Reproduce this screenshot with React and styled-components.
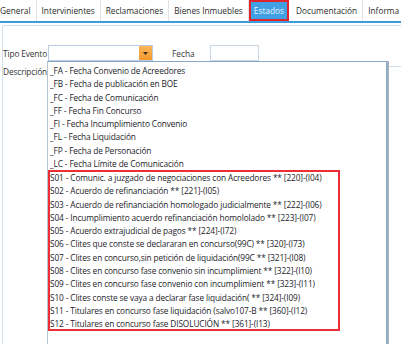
import React from 'react';
import styled, { createGlobalStyle } from 'styled-components';

const GlobalStyle = createGlobalStyle`
    body {
        margin: 0;
        background: #ffffff;
        font-family: "Open Sans", "Noto Sans", sans-serif;
        color: #1b1b1b;
    }
`;

const tabs = ['General', 'Intervinientes', 'Reclamaciones', 'Bienes Inmuebles', 'Estados', 'Documentación', 'Informa'];

const plainItems = [
    '_FA - Fecha Convenio de Acreedores',
    '_FB - Fecha de publicación en BOE',
    '_FC - Fecha de Comunicación',
    '_FF - Fecha Fin Concurso',
    '_FI - Fecha Incumplimiento Convenio',
    '_FL - Fecha Liquidación',
    '_FP - Fecha de Personación',
    '_LC - Fecha Límite de Comunicación'
];

const markedItems = [
    'S01 - Comunic. a juzgado de negociaciones con Acreedores ** [220]-(I04)',
    'S02 - Acuerdo de refinanciación ** [221]-(I05)',
    'S03 - Acuerdo de refinanciación homologado judicialmente ** [222]-(I06)',
    'S04 - Incumplimiento acuerdo refinanciación homololado ** [223]-(I07)',
    'S05 - Acuerdo extrajudicial de pagos ** [224]-(I72)',
    'S06 - Clites que conste se declararan en concurso(99C) ** [320]-(I73)',
    'S07 - Clites en concurso,sin petición de liquidación(99C ** [321]-(I08)',
    'S08 - Clites en concurso fase convenio sin incumplimient ** [322]-(I10)',
    'S09 - Clites en concurso fase convenio con incumplimient ** [323]-(I11)',
    'S10 - Clites conste se vaya a declarar fase liquidación( ** [324]-(I09)',
    'S11 - Titulares en concurso fase liquidación (salvo107-B ** [360]-(I12)',
    'S12 - Titulares en concurso fase DISOLUCIÓN ** [361]-(I13)'
];

const App = () => {
    return (
        <Page>
            <GlobalStyle />
            <TabBar>
                {tabs.map(t => (
                    <Tab key={t} $active={t === 'Estados'}>{t}</Tab>
                ))}
            </TabBar>
            <Panel>
                <FormRow>
                    <Label>Tipo Evento</Label>
                    <Combo>
                        <ComboInput />
                        <ComboButton>
                            <svg width="5" height="3" viewBox="0 0 5 3">
                                <path d="M0 0h5L2.5 3z" fill="#3a2a1a" />
                            </svg>
                        </ComboButton>
                        <DropList>
                            {plainItems.map(i => <Item key={i}>{i}</Item>)}
                            <Marked>
                                {markedItems.map(i => <Item key={i}>{i}</Item>)}
                            </Marked>
                        </DropList>
                    </Combo>
                    <DateLabel>Fecha</DateLabel>
                    <DateInput />
                </FormRow>
                <FormRow $second>
                    <Label>Descripción</Label>
                    <TextArea />
                </FormRow>
            </Panel>
        </Page>
    );
};

const Page = styled.div`
    width: 401px;
    height: 344px;
    overflow: hidden;
    display: flex;
    flex-direction: column;
`;

const TabBar = styled.div`
    display: flex;
    height: 21px;
    border-bottom: 2px solid #3b9bdb;
    font-size: 8.3px;
    white-space: nowrap;
`;

const Tab = styled.div`
    display: flex;
    align-items: center;
    padding: ${p => (p.$active ? '0 3px' : '0 5px')};
    height: 21px;
    box-sizing: border-box;
    color: ${p => (p.$active ? '#eaf5ff' : '#2a2a2a')};
    background: ${p => (p.$active ? '#41a0e4' : 'transparent')};
    border: ${p => (p.$active ? '2px solid #e0242c' : 'none')};
    border-right: ${p => (p.$active ? '2px solid #e0242c' : '1px solid #e2e2e2')};
    margin-left: ${p => (p.$active ? '0' : '0')};
    margin-right: ${p => (p.$active ? '2px' : '0')};
    &:first-child { padding-left: 0; }
`;

const Panel = styled.div`
    flex: 1;
    margin: 2px 0 0 2px;
    border: 1px solid #d3dfeb;
    border-right: none;
    border-bottom: none;
    border-radius: 3px 0 0 0;
    padding: 19px 0 0 0;
    display: flex;
    flex-direction: column;
`;

const FormRow = styled.div`
    display: flex;
    align-items: ${p => (p.$second ? 'flex-start' : 'center')};
    height: ${p => (p.$second ? 'auto' : '16px')};
    margin-top: ${p => (p.$second ? '5px' : '0')};
`;

const Label = styled.div`
    width: 45px;
    font-size: 8.3px;
    letter-spacing: -0.12px;
    color: #333;
    white-space: nowrap;
`;

const Combo = styled.div`
    position: relative;
    display: flex;
    width: 105px;
    height: 16px;
    border: 1px solid #b9cde2;
    box-sizing: border-box;
`;

const ComboInput = styled.div`
    flex: 1;
    background: #fff;
`;

const ComboButton = styled.div`
    width: 13px;
    display: flex;
    align-items: center;
    justify-content: center;
    background: linear-gradient(#fbb55a, #f39a2c);
`;

const DropList = styled.div`
    position: absolute;
    left: -2px;
    top: 15px;
    width: 340px;
    height: 290px;
    background: #fff;
    border: 1px solid #8aa6c8;
    border-left-color: #b8c4d2;
    box-shadow: 2px 0 0 #a3b0c0;
    box-sizing: border-box;
    padding: 2px 0 0 2px;
    z-index: 2;
`;

const Item = styled.div`
    font-size: 8.3px;
    letter-spacing: -0.12px;
    line-height: 13.27px;
    white-space: nowrap;
    color: #1c1c2a;
`;

const Marked = styled.div`
    width: 289px;
    margin-left: -1px;
    padding-left: 1px;
    outline: 2px solid #ec2e36;
    outline-offset: -1px;
    margin-top: 1px;
`;

const DateLabel = styled.div`
    margin-left: 19px;
    width: 38px;
    font-size: 8.3px;
    color: #333;
`;

const DateInput = styled.div`
    width: 49px;
    height: 16px;
    box-sizing: border-box;
    border: 1px solid #c8d6e6;
`;

const TextArea = styled.div`
    flex: 1;
    height: 60px;
    margin-left: 1px;
    border-top: 1px solid #cfdbe8;
    border-left: 1px solid #cfdbe8;
`;

export default App;
